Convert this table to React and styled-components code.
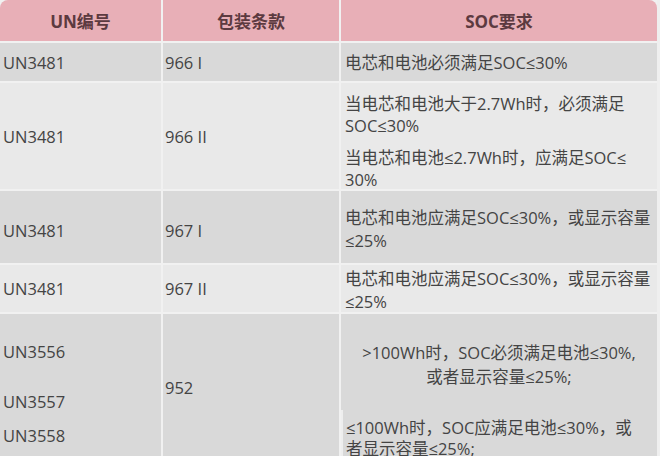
import React from "react";
import styled, { createGlobalStyle } from "styled-components";

const GlobalStyle = createGlobalStyle`
  html, body { margin: 0; padding: 0; background: #efefef; }
  body {
    font-family: "Open Sans", "Noto Sans", "Noto Sans CJK SC", sans-serif;
    font-size: 16.5px;
    color: #444444;
  }
`;

const Table = styled.div`
  display: grid;
  grid-template-columns: 161px 176px 316px;
  grid-template-rows: 41px 38px 106px 72px 47px 146px;
  gap: 2px;
  width: 657px;
  height: 460px;
  overflow: hidden;
  background: #f1f1f1;
`;

const HeadCell = styled.div`
  display: flex;
  align-items: center;
  justify-content: center;
  background: #e8afb7;
  color: #5c3a40;
  font-weight: 700;
  font-size: 17px;
  border-top-left-radius: ${(p) => (p.$first ? "8px" : "0")};
  border-top-right-radius: ${(p) => (p.$last ? "8px" : "0")};
`;

const Cell = styled.div`
  display: flex;
  flex-direction: column;
  justify-content: ${(p) => (p.$top ? "flex-start" : "center")};
  background: ${(p) => (p.$dark ? "#d9d9d9" : "#e9e9e9")};
  padding: ${(p) => p.$pad || "0 0 0 3px"};
  line-height: ${(p) => p.$lh || 23}px;
  box-sizing: border-box;
  min-width: 0;
  white-space: nowrap;
`;

const Para = styled.p`
  margin: 0 0 ${(p) => p.$gap || 0}px;
`;

const CenterLine = styled.div`
  text-align: center;
  line-height: 24px;
`;

const Label = styled.div`
  margin-bottom: ${(p) => p.$gap || 0}px;
  line-height: 22px;
`;

const SubBlock = styled.div`
  margin-top: ${(p) => p.$gap || 0}px;
  flex: 1;
  border-left: 2px solid #eeeeee;
  padding: 7px 0 0 3px;
  line-height: 21px;
`;

export default function App() {
  return (
    <>
      <GlobalStyle />
      <Table>
        <HeadCell $first>UN编号</HeadCell>
        <HeadCell>包装条款</HeadCell>
        <HeadCell $last>SOC要求</HeadCell>

        <Cell $dark>UN3481</Cell>
        <Cell $dark $pad="0 0 0 2px">966 I</Cell>
        <Cell $dark $pad="0 0 0 4px">电芯和电池必须满足SOC≤30%</Cell>

        <Cell>UN3481</Cell>
        <Cell $pad="0 0 0 2px">966 II</Cell>
        <Cell $top $lh={22} $pad="10px 0 0 4px">
          <Para $gap={10}>
            当电芯和电池大于2.7Wh时，必须满足
            <br />
            SOC≤30%
          </Para>
          <Para>
            当电芯和电池≤2.7Wh时，应满足SOC≤
            <br />
            30%
          </Para>
        </Cell>

        <Cell $dark $pad="6px 0 0 3px">UN3481</Cell>
        <Cell $dark $pad="6px 0 0 2px">967 I</Cell>
        <Cell $dark $pad="4px 0 0 4px">
          <Para>
            电芯和电池应满足SOC≤30%，或显示容量
            <br />
            ≤25%
          </Para>
        </Cell>

        <Cell>UN3481</Cell>
        <Cell $pad="0 0 0 2px">967 II</Cell>
        <Cell $pad="2px 0 0 4px">
          <Para>
            电芯和电池应满足SOC≤30%，或显示容量
            <br />
            ≤25%
          </Para>
        </Cell>

        <Cell $dark $top $pad="27px 0 0 3px">
          <Label $gap={28}>UN3556</Label>
          <Label $gap={12}>UN3557</Label>
          <Label>UN3558</Label>
        </Cell>
        <Cell $dark $pad="0 0 0 2px">952</Cell>
        <Cell $dark $top $pad="27px 0 0 0">
          <CenterLine>&gt;100Wh时，SOC必须满足电池≤30%,</CenterLine>
          <CenterLine>或者显示容量≤25%;</CenterLine>
          <SubBlock $gap={21}>
            ≤100Wh时，SOC应满足电池≤30%，或
            <br />
            者显示容量≤25%;
          </SubBlock>
        </Cell>
      </Table>
    </>
  );
}
